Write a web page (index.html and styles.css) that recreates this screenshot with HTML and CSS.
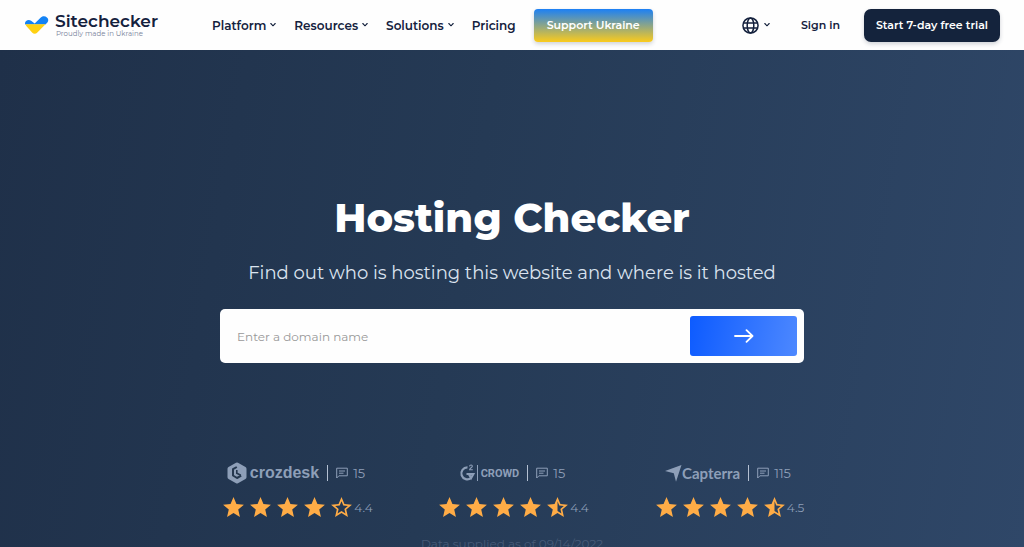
FILE: index.html
```html
<!DOCTYPE html>
<html lang="en">
<head>
<meta charset="UTF-8">
<meta name="viewport" content="width=device-width, initial-scale=1.0">
<title>Hosting Checker</title>
<link rel="stylesheet" href="styles.css">
</head>
<body>
<!-- Shared icons -->
<svg class="sprite" aria-hidden="true">
    <symbol id="chevron" viewBox="0 0 8 6"><path d="M1.800 1.500L4 3.800l2.200-2.300" fill="none" stroke="currentColor" stroke-width="1.100" stroke-linecap="round"/></symbol>
    <symbol id="star" viewBox="0 0 24 24"><path d="M12 17.270L18.180 21l-1.640-7.030L22 9.240l-7.190-.61L12 2 9.190 8.630 2 9.240l5.460 4.730L5.820 21z"/></symbol>
    <symbol id="star-half" viewBox="0 0 24 24"><path d="M22 9.240l-7.190-.62L12 2 9.190 8.630 2 9.240l5.460 4.730L5.820 21 12 17.270 18.180 21l-1.630-7.030L22 9.240zM12 15.400V6.100l1.710 4.040 4.380.38-3.320 2.880 1 4.280L12 15.400z"/></symbol>
    <symbol id="star-empty" viewBox="0 0 24 24"><path d="M22 9.240l-7.190-.62L12 2 9.190 8.630 2 9.240l5.460 4.730L5.820 21 12 17.270 18.180 21l-1.630-7.030L22 9.240zM12 15.400l-3.760 2.270 1-4.280-3.320-2.880 4.380-.38L12 6.100l1.710 4.040 4.380.38-3.320 2.880 1 4.280L12 15.400z"/></symbol>
    <symbol id="comment" viewBox="0 0 12 12"><path d="M.7 11V1.200h10.600v7.600H2.900zM3 4h6M3 6.200h4.500" fill="none" stroke="currentColor"/></symbol>
</svg>

<header class="header">
    <a class="logo" href="#">
        <svg class="logo-mark" viewBox="0 0 24 20" aria-hidden="true">
            <path d="M.8 9.500C-.8 6 4 3.600 6.600 5.800l3.600 2.800 6.100-6.100C20-1 26 3.400 22.900 7.400L20.900 9.500z" fill="#1483f5"/>
            <path d="M.8 9.300h20.200l-8.200 8.200c-1.600 1.600-3.600 1.600-5.200 0L1.800 11z" fill="#ffd112"/>
        </svg>
        <span class="logo-text">
            <span class="logo-name">Sitechecker</span>
            <span class="logo-note">Proudly made in Ukraine</span>
        </span>
    </a>
    <nav class="nav">
        <a href="#">Platform <svg class="chevron"><use href="#chevron"/></svg></a>
        <a href="#">Resources <svg class="chevron"><use href="#chevron"/></svg></a>
        <a href="#">Solutions <svg class="chevron"><use href="#chevron"/></svg></a>
        <a href="#">Pricing</a>
    </nav>
    <a class="btn btn-support" href="#">Support Ukraine</a>
    <div class="account">
        <button class="lang" type="button" aria-label="Language">
            <svg class="globe" viewBox="0 0 18 18" fill="none" stroke="currentColor" stroke-width="1.600" aria-hidden="true">
                <circle cx="9" cy="9" r="8"/>
                <ellipse cx="9" cy="9" rx="3.500" ry="8"/>
                <path d="M1.500 6.300h15M1.500 11.700h15"/>
            </svg>
            <svg class="chevron"><use href="#chevron"/></svg>
        </button>
        <a class="sign-in" href="#">Sign in</a>
        <a class="btn btn-trial" href="#">Start 7-day free trial</a>
    </div>
</header>

<main class="hero">
    <h1 class="title">Hosting Checker</h1>
    <p class="subtitle">Find out who is hosting this website and where is it hosted</p>
    <form class="search">
        <input class="search-input" type="text" placeholder="Enter a domain name" aria-label="Domain name">
        <button class="search-btn" type="button" aria-label="Check">
            <svg class="arrow" viewBox="0 0 20 14" aria-hidden="true"><path d="M1 7h17M12.500 1.200L18.500 7l-6 5.800" fill="none" stroke="#fff" stroke-width="1.800" stroke-linecap="round" stroke-linejoin="round"/></svg>
        </button>
    </form>

    <div class="ratings">
        <div class="rating">
            <div class="source">
                <span class="brand crozdesk">
                    <svg class="crozdesk-mark" viewBox="0 0 20 22" aria-hidden="true">
                        <path d="M10 2.500l7.500 4.200v8.600L10 19.500l-7.500-4.200V6.700z" fill="currentColor" stroke="currentColor" stroke-width="4" stroke-linejoin="round"/>
                        <path d="M9.800 5L6 7.200v6.300l4 2.500 4.200-2.300" fill="none" stroke="#25384f" stroke-width="2" stroke-linejoin="round"/>
                        <path d="M9.800 8v3.200l4 2" fill="none" stroke="#25384f" stroke-width="1.600"/>
                    </svg>
                    crozdesk
                </span>
                <span class="reviews"><svg class="comment"><use href="#comment"/></svg>15</span>
            </div>
            <div class="stars">
                <svg><use href="#star"/></svg>
                <svg><use href="#star"/></svg>
                <svg><use href="#star"/></svg>
                <svg><use href="#star"/></svg>
                <svg><use href="#star-empty"/></svg>
                <span class="score">4.4</span>
            </div>
        </div>
        <div class="rating">
            <div class="source">
                <span class="brand crowd">
                    <svg class="crowd-mark" viewBox="0 0 20 18" fill="none" stroke="currentColor" aria-hidden="true">
                        <path d="M8.500 3.400A6 6 0 1 0 12.200 14M7.500 10h6.800l-2.200 4-1.900-3.400" stroke-width="2.200"/>
                        <path d="M10.500 2.300c.4-1.800 3-1.600 2.800.1-.1 1.200-2.500 1.700-2.700 3.300h3.200" stroke-width="1.100"/>
                        <path d="M18.500 1v16" stroke-width="1"/>
                    </svg>
                    CROWD
                </span>
                <span class="reviews"><svg class="comment"><use href="#comment"/></svg>15</span>
            </div>
            <div class="stars">
                <svg><use href="#star"/></svg>
                <svg><use href="#star"/></svg>
                <svg><use href="#star"/></svg>
                <svg><use href="#star"/></svg>
                <svg><use href="#star-half"/></svg>
                <span class="score">4.4</span>
            </div>
        </div>
        <div class="rating">
            <div class="source">
                <span class="brand capterra">
                    <svg class="capterra-mark" viewBox="0 0 17 17" fill="currentColor" aria-hidden="true"><path d="M0 6L16.500 0 11 16.800 8.800 8.200z"/></svg>
                    Capterra
                </span>
                <span class="reviews"><svg class="comment"><use href="#comment"/></svg>115</span>
            </div>
            <div class="stars">
                <svg><use href="#star"/></svg>
                <svg><use href="#star"/></svg>
                <svg><use href="#star"/></svg>
                <svg><use href="#star"/></svg>
                <svg><use href="#star-half"/></svg>
                <span class="score">4.5</span>
            </div>
        </div>
    </div>
    <p class="supplied">Data supplied as of 09/14/2022</p>
</main>
</body>
</html>
```

FILE: styles.css
```css
* {
    box-sizing: border-box;
}
body {
    margin: 0;
    font-family: Montserrat, Inter, sans-serif;
    color: #14213d;
}
a {
    color: inherit;
    text-decoration: none;
}
svg {
    flex: none;
}
.sprite {
    display: none;
}

/* Header */
.header {
    display: flex;
    align-items: center;
    height: 50px;
    padding: 0 24px;
    background-color: #fefefe;
    font-size: 11px;
    font-weight: 600;
    white-space: nowrap;
}
.logo {
    display: flex;
    align-items: center;
    gap: 6px;
    margin-right: 54px;
}
.logo-mark {
    width: 25px;
    height: 20px;
}
.logo-text {
    display: flex;
    flex-direction: column;
}
.logo-name {
    font-size: 17px;
    line-height: 18px;
}
.logo-note {
    padding-left: 1px;
    font-size: 7px;
    line-height: 8px;
    font-weight: 400;
    color: #76829a;
}
.nav {
    display: flex;
    gap: 17px;
    margin-right: 18px;
    font-size: 12px;
}
.nav a {
    display: flex;
    align-items: center;
    gap: 3px;
}
.chevron {
    width: 8px;
    height: 6px;
}
.btn {
    display: flex;
    align-items: center;
    height: 33px;
    padding: 0 13px;
    color: #fff;
    box-shadow: 0 2px 4px rgba(20, 33, 61, 0.2);
}
.btn-support {
    border-radius: 4px;
    background: linear-gradient(#1c80f5, #fbcb1c);
}
.btn-trial {
    padding: 0 12px;
    border-radius: 7px;
    background-color: #14233c;
}
.account {
    display: flex;
    align-items: center;
    margin-left: auto;
}
.lang {
    display: flex;
    align-items: center;
    gap: 4px;
    padding: 0;
    border: none;
    background: none;
    color: inherit;
}
.globe {
    width: 17px;
    height: 17px;
}
.sign-in {
    margin: 0 24px 0 30px;
}

/* Hero */
.hero {
    display: flex;
    flex-direction: column;
    align-items: center;
    min-height: calc(100vh - 50px);
    padding: 143px 24px 0;
    background: linear-gradient(100deg, #1f3049, #253a55 45%, #2f4768);
    color: #fff;
}
.title {
    margin: 0;
    font-size: 40px;
    line-height: 50px;
    font-weight: 800;
}
.subtitle {
    margin: 16px 0 22px;
    font-size: 18px;
    line-height: 28px;
    font-weight: 400;
    color: #dbe3ef;
}
.search {
    display: flex;
    width: 100%;
    max-width: 584px;
    padding: 7px;
    border-radius: 5px;
    background-color: #fefefe;
}
.search-input {
    flex: 1;
    min-width: 0;
    padding: 0 10px;
    border: none;
    outline: none;
    background: none;
    font: 400 12px Montserrat, Inter, sans-serif;
}
.search-input::placeholder {
    color: #999;
}
.search-btn {
    display: flex;
    align-items: center;
    justify-content: center;
    width: 107px;
    height: 40px;
    border: none;
    border-radius: 3px;
    background: linear-gradient(100deg, #0d5bff, #4d88ff);
}
.arrow {
    width: 20px;
    height: 14px;
}

/* Ratings */
.ratings {
    display: flex;
    justify-content: space-between;
    width: 100%;
    max-width: 584px;
    margin-top: 98px;
    color: #8e9fb8;
}
.rating {
    display: flex;
    flex-direction: column;
    align-items: center;
    gap: 10px;
    width: 152px;
}
.source,
.brand,
.reviews,
.stars {
    display: flex;
    align-items: center;
}
.source {
    height: 24px;
    gap: 8px;
}
.crozdesk {
    gap: 3px;
    font: 700 16px "Liberation Sans", Arial, sans-serif;
}
.crozdesk-mark {
    width: 20px;
    height: 22px;
}
.crowd {
    gap: 2px;
    font: 700 11px Roboto, sans-serif;
}
.crowd-mark {
    width: 20px;
    height: 18px;
}
.capterra {
    font: 700 15px Lato, sans-serif;
}
.capterra-mark {
    width: 17px;
    height: 17px;
}
.reviews {
    gap: 5px;
    height: 16px;
    padding-left: 8px;
    border-left: 1px solid #b4c0d2;
    font-size: 13px;
}
.comment {
    width: 12px;
    height: 12px;
}
.stars svg {
    width: 25px;
    height: 25px;
    margin-left: 2px;
    fill: #ffac46;
}
.score {
    font-size: 12px;
}
.supplied {
    margin: 16px 0 0;
    font-size: 12px;
    line-height: 16px;
    color: #465a77;
}
```
